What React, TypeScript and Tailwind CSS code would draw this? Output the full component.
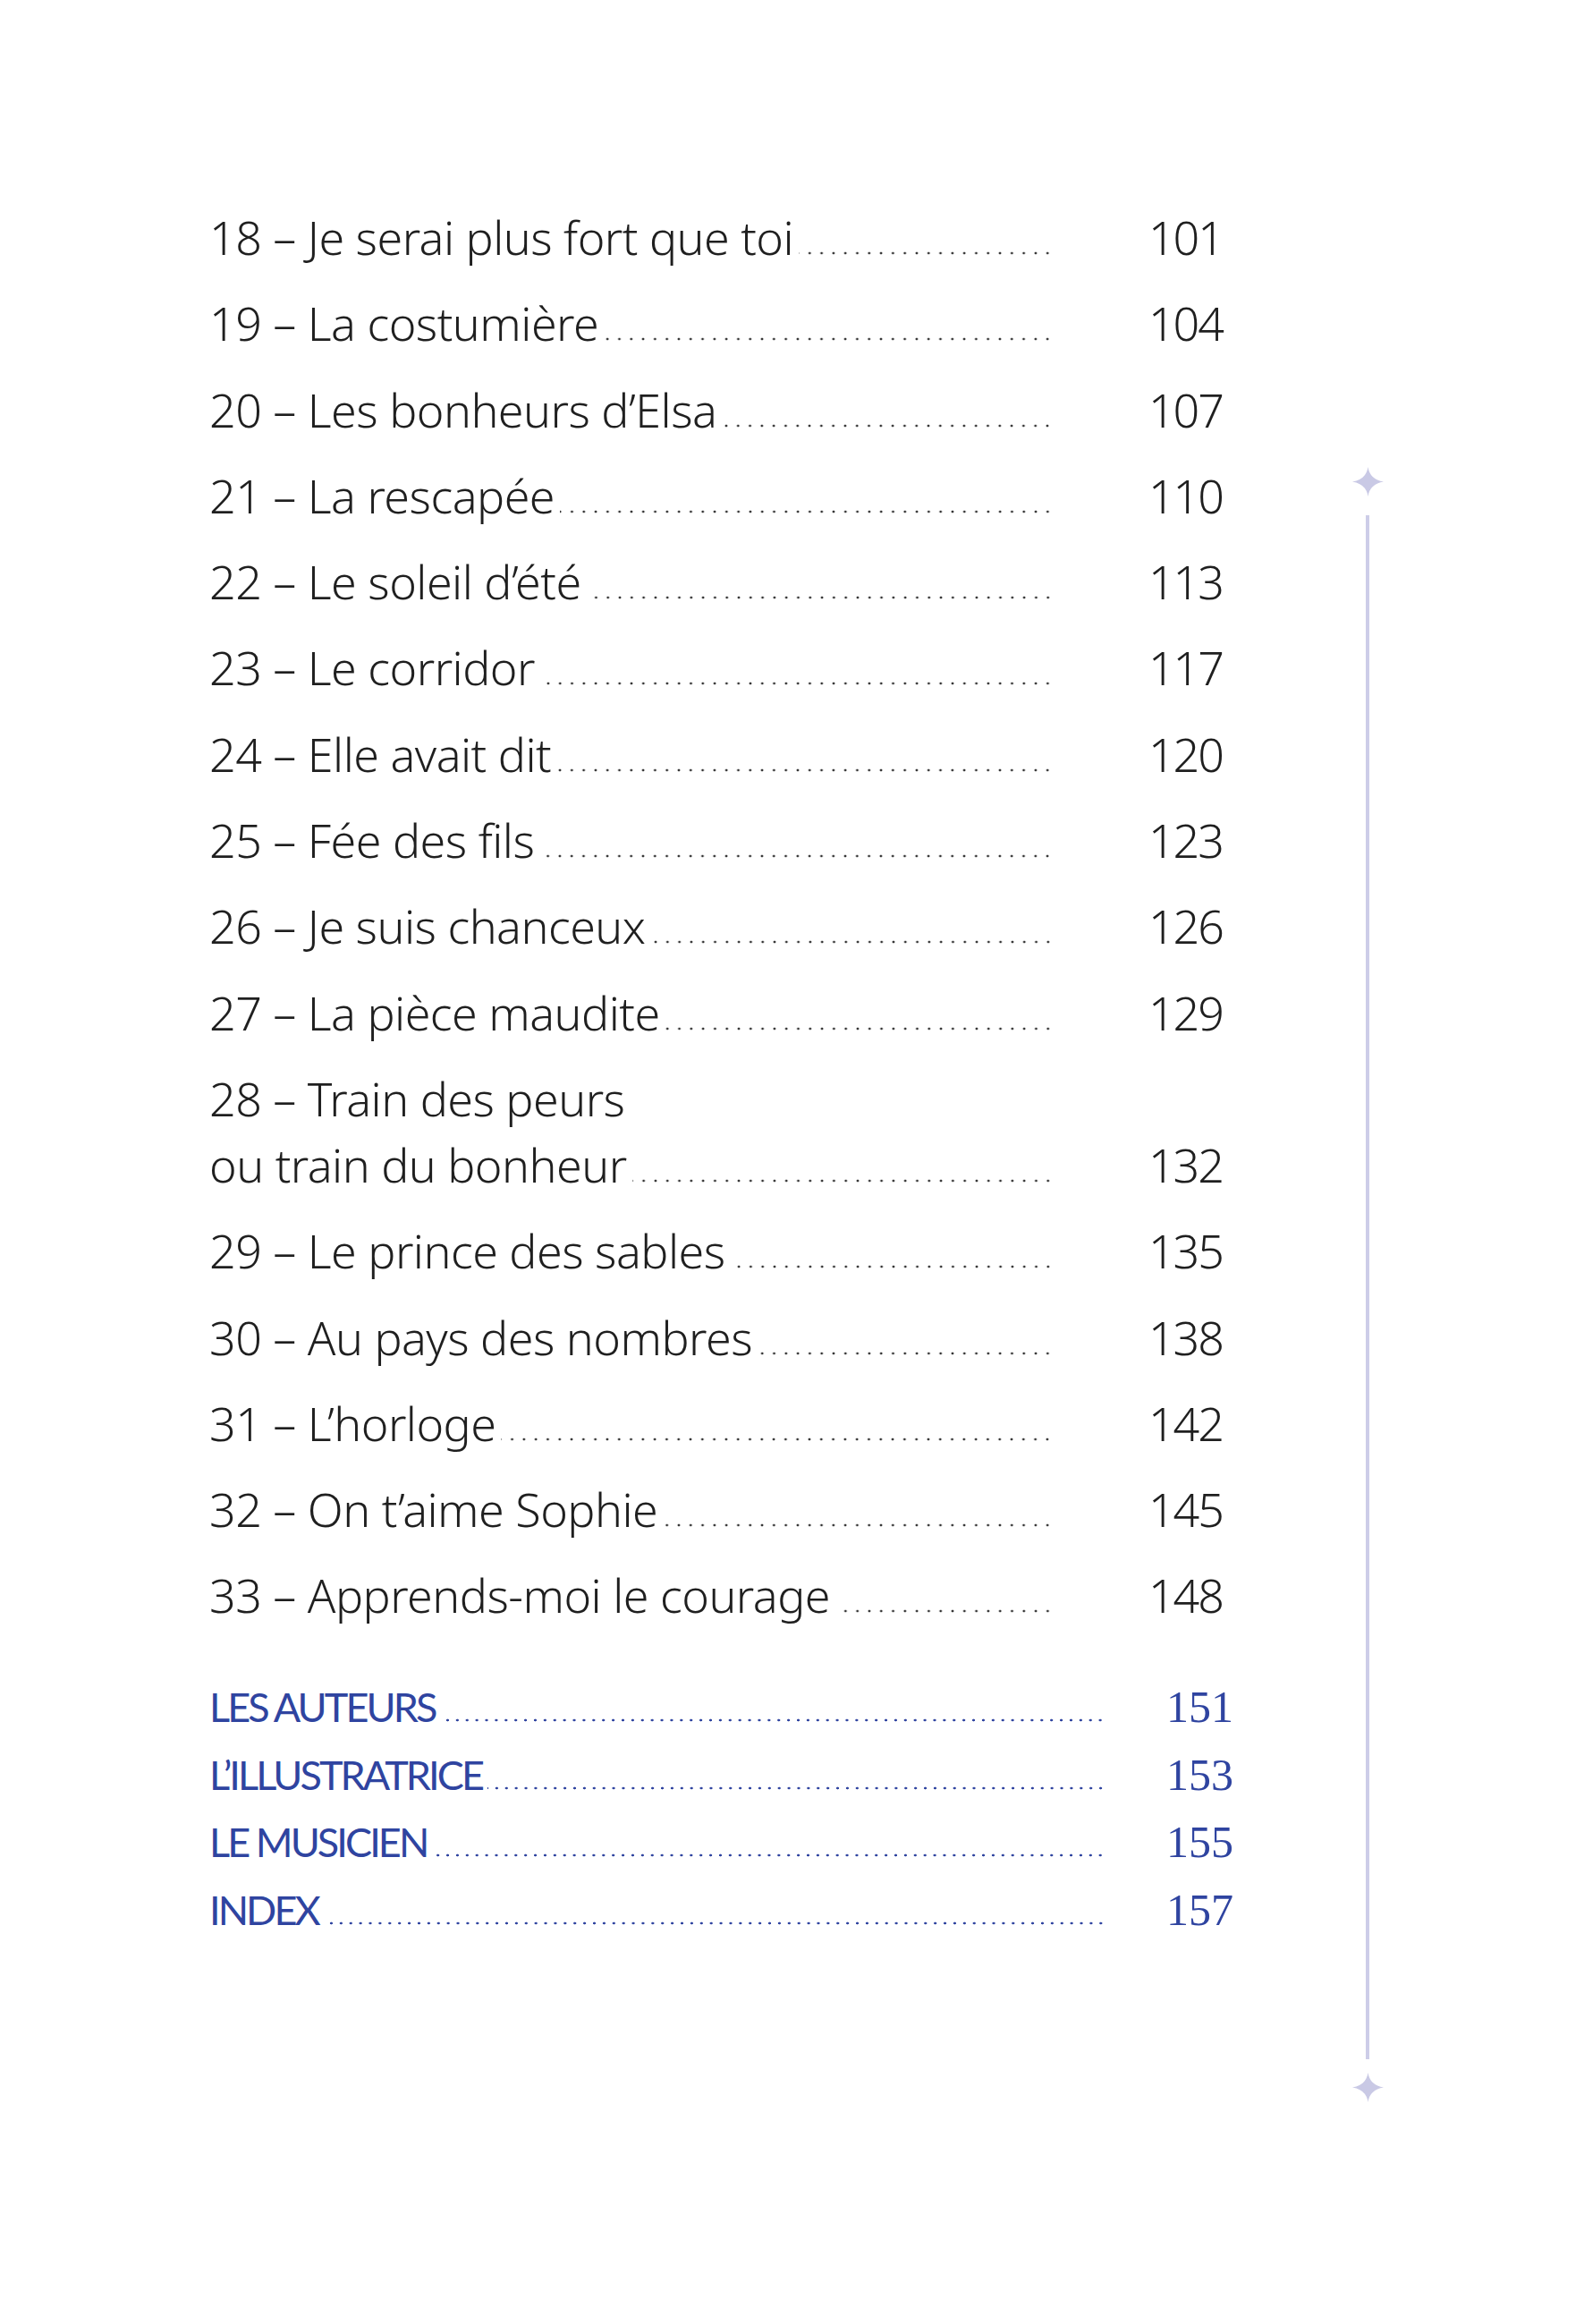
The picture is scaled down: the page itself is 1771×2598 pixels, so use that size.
import React from "react";

const chapters: { title: string[]; page: string }[] = [
  { title: ["18 – Je serai plus fort que toi"], page: "101" },
  { title: ["19 – La costumière"], page: "104" },
  { title: ["20 – Les bonheurs d’Elsa"], page: "107" },
  { title: ["21 – La rescapée"], page: "110" },
  { title: ["22 – Le soleil d’été"], page: "113" },
  { title: ["23 – Le corridor"], page: "117" },
  { title: ["24 – Elle avait dit"], page: "120" },
  { title: ["25 – Fée des fils"], page: "123" },
  { title: ["26 – Je suis chanceux"], page: "126" },
  { title: ["27 – La pièce maudite"], page: "129" },
  { title: ["28 – Train des peurs", "ou train du bonheur"], page: "132" },
  { title: ["29 – Le prince des sables"], page: "135" },
  { title: ["30 – Au pays des nombres"], page: "138" },
  { title: ["31 – L’horloge"], page: "142" },
  { title: ["32 – On t’aime Sophie"], page: "145" },
  { title: ["33 – Apprends-moi le courage"], page: "148" },
];

const extras = [
  { title: "LES AUTEURS", page: "151" },
  { title: "L’ILLUSTRATRICE", page: "153" },
  { title: "LE MUSICIEN", page: "155" },
  { title: "INDEX", page: "157" },
];

function Star() {
  return (
    <svg width="35" height="33" viewBox="0 0 35 33" className="block">
      <path
        d="M17.5 0 Q19.5 14 35 16.5 Q19.5 19 17.5 33 Q15.5 19 0 16.5 Q15.5 14 17.5 0 Z"
        fill="#c9c9e5"
      />
    </svg>
  );
}

export default function App() {
  return (
    <div className="w-[1771px] h-[2598px] bg-white flex text-[#1f1f1f]" style={{ fontFamily: '"Noto Sans", sans-serif' }}>
      <div className="w-[1511px] pl-[234px] pt-[228px]">
        <div className="flex flex-col gap-[22.3px]">
          {chapters.map((c) => (
            <div key={c.page} className="flex flex-col">
              {c.title.slice(0, -1).map((t) => (
                <div key={t} className="text-[52px] leading-[74px] font-light tracking-[-0.01em] whitespace-nowrap">
                  {t}
                </div>
              ))}
              <div className="flex items-baseline">
                <div className="w-[944px] flex items-baseline">
                  <span className="text-[52px] leading-[74px] font-light tracking-[-0.01em] whitespace-nowrap">
                    {c.title[c.title.length - 1]}
                  </span>
                  <span className="flex-1 ml-[6px] h-[6px] bg-[radial-gradient(circle,#333_1.1px,transparent_1.7px)] bg-[length:13.3px_4px] bg-repeat-x bg-right-bottom" />
                </div>
                <span className="ml-[106px] text-[52px] leading-[74px] font-light tracking-[-0.04em]">{c.page}</span>
              </div>
            </div>
          ))}
        </div>
        <div className="mt-[50.6px] flex flex-col text-[#2f44a0]">
          {extras.map((e) => (
            <div key={e.page} className="flex items-baseline h-[75.6px]">
              <div className="w-[1002px] flex items-baseline">
                <span
                  className="text-[45px] leading-[75.6px] tracking-[-0.065em] whitespace-nowrap"
                  style={{ fontFamily: "Lato, sans-serif" }}
                >
                  {e.title}
                </span>
                <span className="flex-1 ml-[6px] h-[6px] bg-[radial-gradient(circle,#2f44a0_1.1px,transparent_1.7px)] bg-[length:10.9px_4px] bg-repeat-x bg-right-bottom" />
              </div>
              <span
                className="ml-[68px] text-[50px] leading-[75.6px]"
                style={{ fontFamily: '"Liberation Serif", serif' }}
              >
                {e.page}
              </span>
            </div>
          ))}
        </div>
      </div>
      <div className="w-[36px] flex flex-col items-center pt-[521.5px]">
        <Star />
        <div className="mt-[21.5px] w-[4px] h-[1726px] bg-[#cdcde8]" />
        <div className="mt-[14.5px]">
          <Star />
        </div>
      </div>
    </div>
  );
}
